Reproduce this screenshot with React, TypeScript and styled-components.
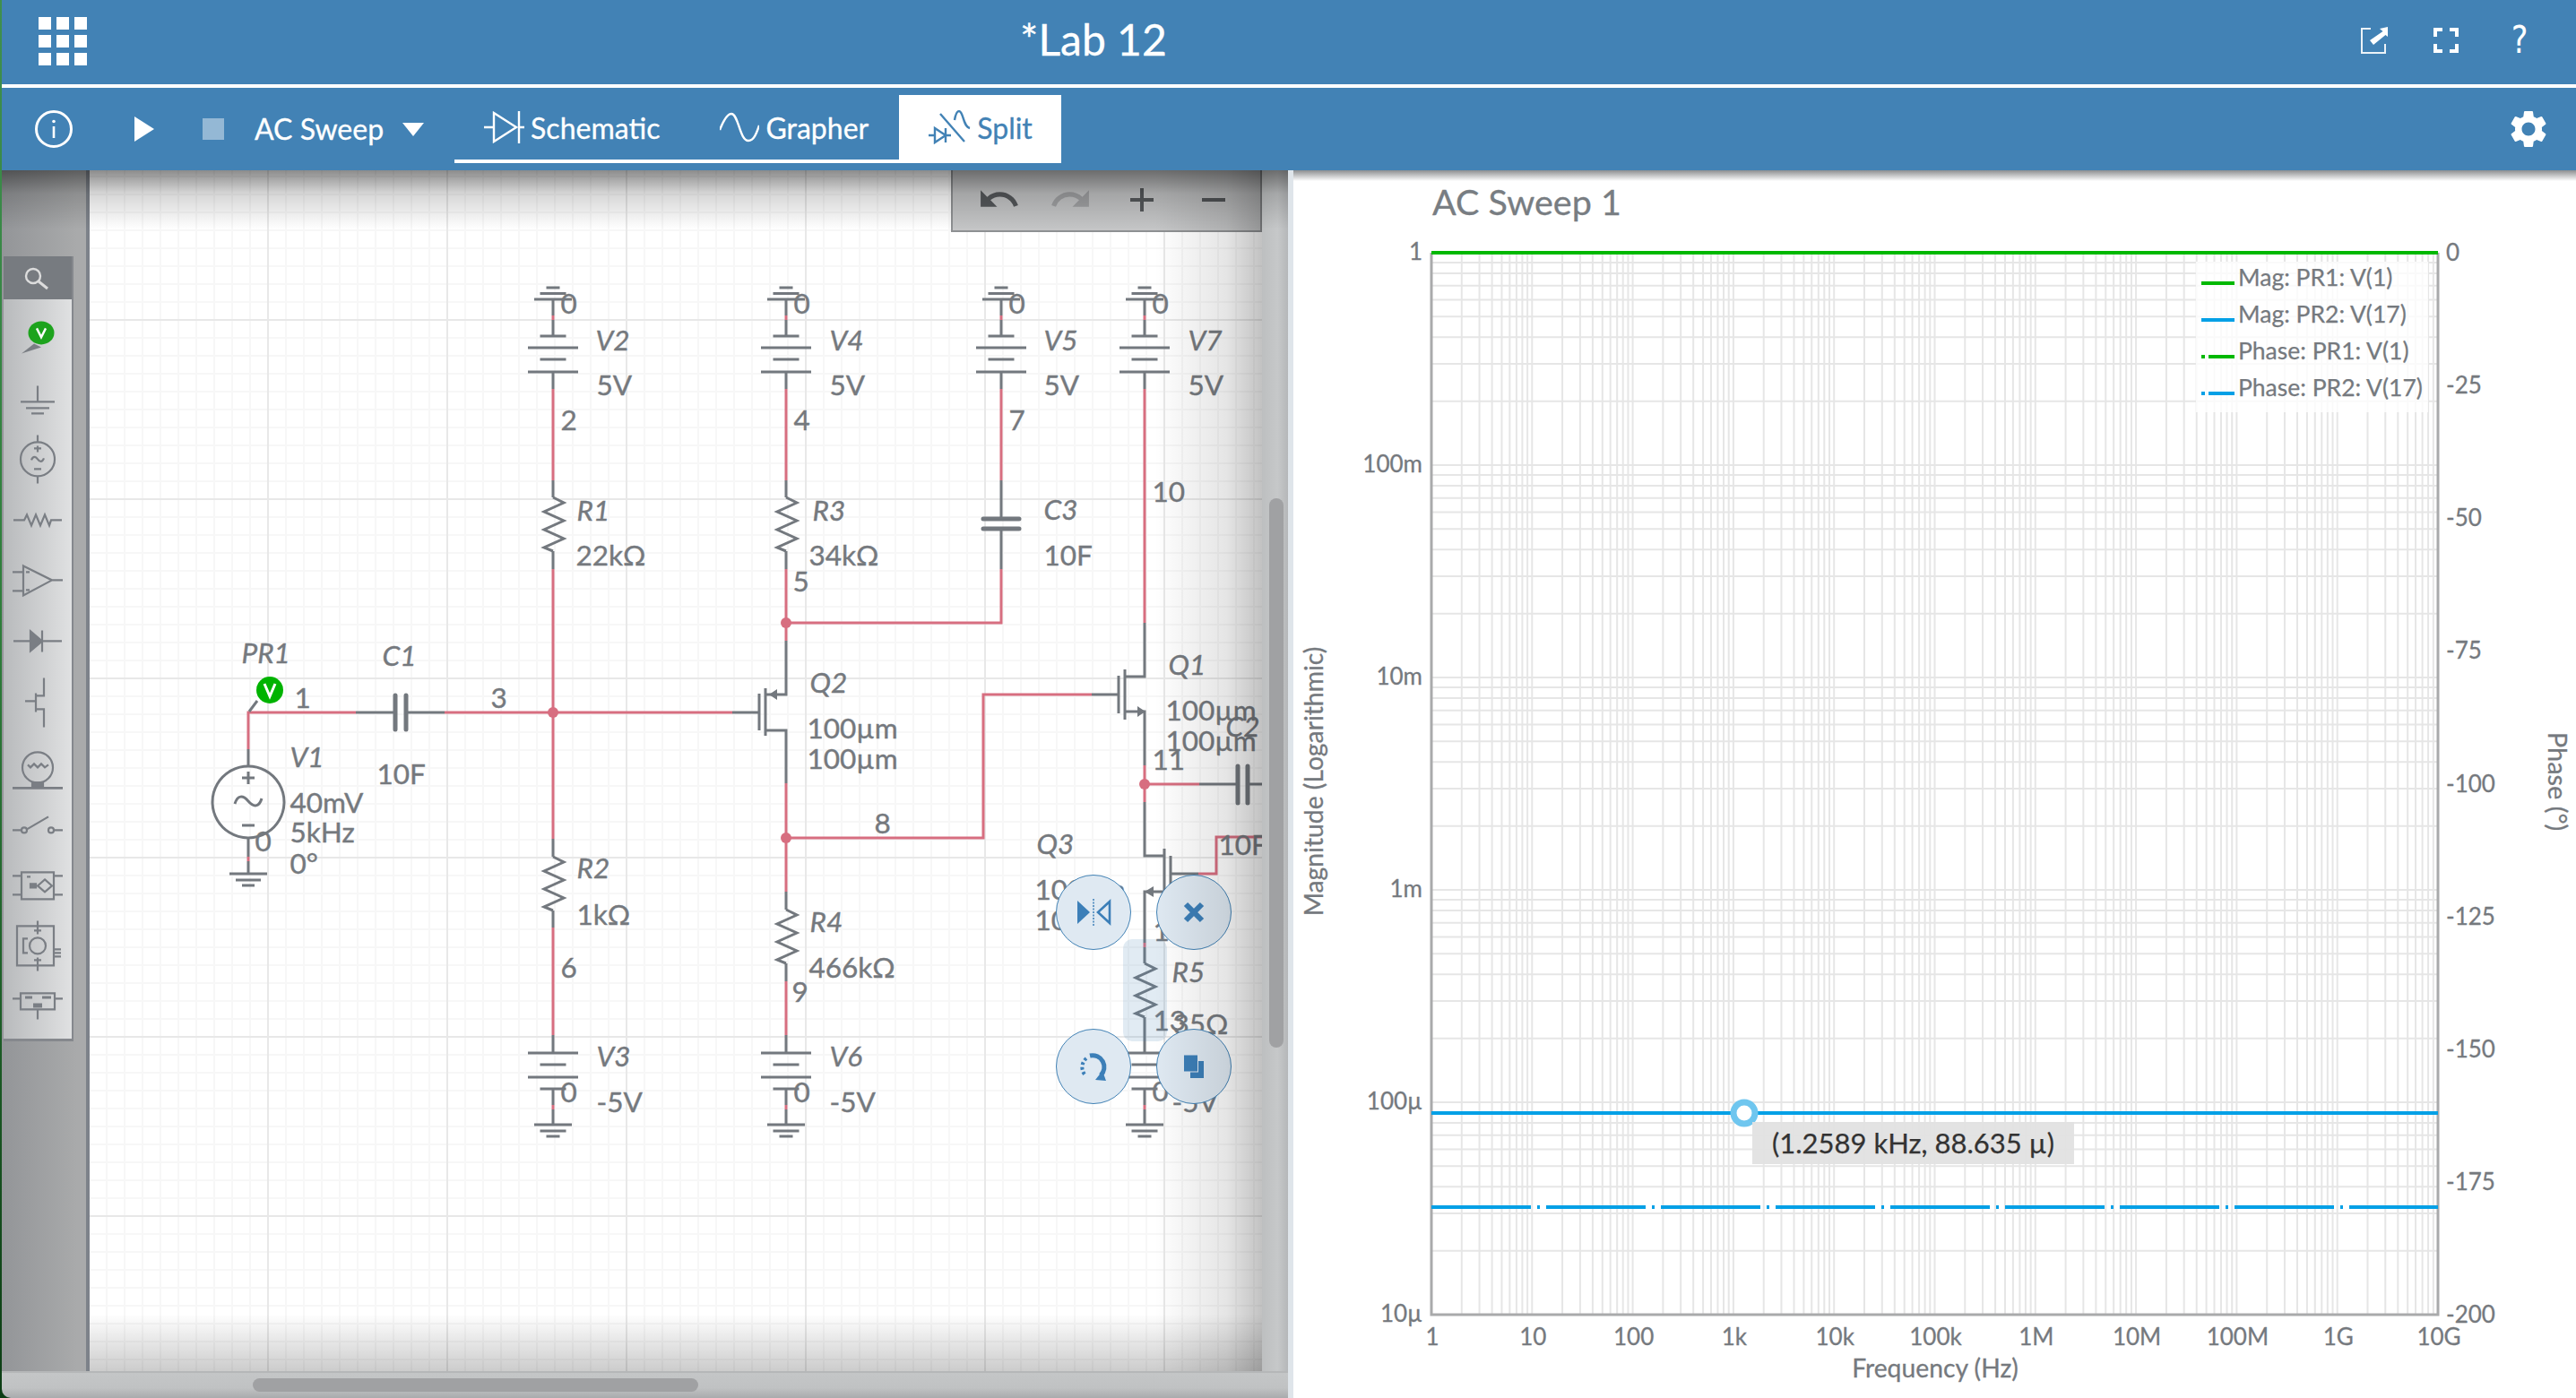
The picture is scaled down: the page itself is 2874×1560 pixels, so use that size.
import React from "react";
import styled, { createGlobalStyle } from "styled-components";
import { MdSettings, MdUndo, MdRedo } from "react-icons/md";

const BLUE = "#4282b5";
const INK = "#75797e";
const WIRE = "#d76e80";
const FONT = `Lato, "Open Sans", sans-serif`;

const Global = createGlobalStyle`
  html, body { margin: 0; padding: 0; background: #fff; }
  * { box-sizing: border-box; }
`;

const Page = styled.div`
  width: 2874px;
  height: 1560px;
  overflow: hidden;
  font-family: ${FONT};
  display: flex;
  flex-direction: column;
  padding-left: 2px;
  background: linear-gradient(to bottom, #3f8f4e, #2e7d3a 45%, #0c3d14);
`;

/* ---------- header ---------- */
const Header = styled.header`
  height: 98px;
  flex: none;
  background: ${BLUE};
  border-bottom: 4px solid #fff;
  display: flex;
  align-items: center;
  color: #fff;
`;
const Launcher = styled.div`
  margin-left: 41px;
  width: 54px;
  height: 54px;
  display: grid;
  grid-template-columns: repeat(3, 14px);
  grid-template-rows: repeat(3, 14px);
  gap: 6px;
  margin-top: -2px;
`;
const LauncherCell = styled.span`
  background: #fff;
`;
const DocTitle = styled.h1`
  margin: 0 0 6px 1041px;
  font-size: 48px;
  font-weight: 400;
  line-height: 1;
  -webkit-text-stroke: 0.3px #fff;
`;
const HeaderIcons = styled.div`
  margin-left: auto;
  display: flex;
  align-items: center;
  padding-right: 52px;
  margin-top: -4px;
`;
const HeaderGlyph = styled.svg`
  display: block;
  margin-right: 51px;
`;
const HelpMark = styled.span`
  font-size: 42px;
  line-height: 1;
  margin-left: 6px;
  font-family: "DejaVu Sans", sans-serif;
  color: #fff;
  transform: scaleX(0.84);
`;

/* ---------- toolbar ---------- */
const Toolbar = styled.nav`
  height: 92px;
  flex: none;
  background: ${BLUE};
  display: flex;
  align-items: center;
  padding-left: 37px;
  color: #fff;
  position: relative;
  -webkit-text-stroke: 0.3px currentColor;
`;
const ToolGlyph = styled.svg<{ $gap?: number }>`
  display: block;
  flex: none;
  margin-left: ${(p) => p.$gap ?? 0}px;
`;
const StopBox = styled.span`
  width: 24px;
  height: 24px;
  margin-left: 54px;
  background: #94b8d5;
`;
const SimMode = styled.span`
  margin-left: 34px;
  font-size: 32px;
  line-height: 1;
`;
const TabBar = styled.div`
  margin-left: 34px;
  height: 76px;
  display: flex;
  border-bottom: 4px solid #fff;
`;
const Tab = styled.div<{ $active?: boolean }>`
  height: 76px;
  padding: 0 ${(p) => (p.$active ? 32 : 34)}px 0 33px;
  display: flex;
  align-items: center;
  gap: 7px;
  font-size: 32px;
  color: ${(p) => (p.$active ? BLUE : "#fff")};
  background: ${(p) => (p.$active ? "#fff" : "transparent")};
`;
const TabGlyph = styled.svg`
  display: block;
  flex: none;
  fill: none;
  stroke: currentColor;
  stroke-width: 2.4;
  margin-bottom: 4px;
`;
const TabLabel = styled.span`
  line-height: 1;
  margin-bottom: 3px;
`;
const Gear = styled.div`
  margin-left: auto;
  margin-right: 28px;
  display: flex;
`;

/* ---------- workspace ---------- */
const Workspace = styled.main`
  flex: 1;
  display: flex;
  min-height: 0;
`;
const LeftPane = styled.section`
  width: 1435px;
  flex: none;
  display: flex;
  flex-direction: column;
  position: relative;
  border-bottom-left-radius: 10px;
  overflow: hidden;
  &::after {
    content: "";
    position: absolute;
    inset: 0 0 auto 0;
    height: 66px;
    background: linear-gradient(to bottom, rgba(0, 0, 0, 0.45), rgba(0, 0, 0, 0.16) 26px, rgba(0, 0, 0, 0) 66px);
    pointer-events: none;
    z-index: 5;
  }
`;
const EditorRow = styled.div`
  display: flex;
  height: 1340px;
  flex: none;
`;
const Sidebar = styled.aside`
  width: 98px;
  flex: none;
  background: linear-gradient(to right, #939598, #a9aaab 90%);
  border-right: 4px solid #7d828a;
  padding: 96px 0 0 2px;
`;
const Palette = styled.div`
  width: 78px;
  height: 876px;
  background: linear-gradient(to right, #b8babc, #e0e1e2);
  border-right: 2px solid #85888d;
  border-bottom: 3px solid #85888d;
  display: flex;
  flex-direction: column;
`;
const PaletteSearch = styled.div`
  height: 48px;
  flex: none;
  background: #777b80;
  display: flex;
  align-items: center;
  justify-content: center;
  padding-top: 4px;
`;
const PaletteList = styled.div`
  padding-top: 3px;
  display: flex;
  flex-direction: column;
`;
const PaletteCell = styled.svg`
  display: block;
  width: 76px;
  height: 68.8px;
  overflow: visible;
  fill: none;
  stroke: #7a7e84;
  stroke-width: 2.2;
`;

const Canvas = styled.div`
  position: relative;
  width: 1308px;
  flex: none;
  overflow: hidden;
  background-color: #fff;
  background-image: linear-gradient(to right, #e8e8e8 2px, transparent 2px),
    linear-gradient(to bottom, #e8e8e8 2px, transparent 2px),
    linear-gradient(to right, #f7f7f7 2px, transparent 2px),
    linear-gradient(to bottom, #f7f7f7 2px, transparent 2px);
  background-size: 200px 200px, 200px 200px, 20px 20px, 20px 20px;
  background-position: 198px 0, 0 166px, 18px 0, 0 6px;
  &::after {
    content: "";
    position: absolute;
    inset: 0;
    pointer-events: none;
    z-index: 4;
    background: linear-gradient(to top, rgba(0, 0, 0, 0.2), rgba(0, 0, 0, 0) 64px),
      linear-gradient(to left, rgba(0, 0, 0, 0.24), rgba(0, 0, 0, 0.1) 40px, rgba(0, 0, 0, 0) 120px);
  }
`;
const Schematic = styled.svg`
  display: block;
  font-family: ${FONT};
`;
const Grey = styled.path`
  fill: none;
  stroke: #73787e;
  stroke-width: 3;
`;
const Red = styled.path`
  fill: none;
  stroke: ${WIRE};
  stroke-width: 3;
`;
const Plate = styled.path`
  fill: none;
  stroke: #73787e;
  stroke-width: 5;
  stroke-linecap: round;
`;
const Junction = styled.circle`
  fill: ${WIRE};
`;
const Arrow = styled.path`
  fill: #73787e;
`;
const Label = styled.text<{ $italic?: boolean }>`
  font-size: 31.5px;
  fill: ${INK};
  stroke: ${INK};
  stroke-width: 0.4px;
  font-style: ${(p) => (p.$italic ? "italic" : "normal")};
`;

const ZoomBar = styled.div`
  position: absolute;
  top: 0;
  right: 0;
  width: 347px;
  height: 69px;
  background: #c4c5c6;
  border: 2px solid #8e9092;
  border-top: none;
  display: grid;
  grid-template-columns: repeat(4, 80px);
  align-items: center;
  justify-items: center;
  padding-bottom: 2px;
  padding-left: 11px;
`;
const ZoomSign = styled.svg`
  display: block;
  stroke: #55585b;
  stroke-width: 4;
`;
const Handle = styled.div<{ $x: number; $y: number }>`
  position: absolute;
  left: ${(p) => p.$x}px;
  top: ${(p) => p.$y}px;
  width: 84px;
  height: 84px;
  border-radius: 50%;
  background: #dfe9f2;
  border: 1.5px solid ${BLUE};
  z-index: 2;
`;
const HandleGlyph = styled.svg`
  display: block;
  position: absolute;
  inset: -1.5px;
  width: 84px;
  height: 84px;
`;
const Selection = styled.div`
  position: absolute;
  left: 1153px;
  top: 858px;
  width: 49px;
  height: 114px;
  border-radius: 10px;
  background: rgba(66, 130, 181, 0.16);
`;

const VTrack = styled.div`
  width: 29px;
  flex: none;
  background: linear-gradient(to right, #bdbfc0, #c6c8c9 60%, #b5b7b9);
  padding: 366px 0 0 8px;
`;
const VThumb = styled.div`
  width: 16px;
  height: 613px;
  border-radius: 8px;
  background: #a0a1a3;
`;
const HTrack = styled.div`
  height: 30px;
  flex: none;
  background: linear-gradient(to bottom, #c4c6c7, #c0c2c3 60%, #a9abad);
  border-top: 2px solid #b5b7b8;
  padding: 6px 0 0 280px;
`;
const HThumb = styled.div`
  width: 497px;
  height: 15px;
  border-radius: 8px;
  background: #a0a1a3;
`;
const Gutter = styled.div`
  width: 6px;
  flex: none;
  background: #dfe5ea;
`;
const RightPane = styled.section`
  flex: 1;
  position: relative;
  background: #fff;
  &::before {
    content: "";
    position: absolute;
    inset: 0 0 auto 0;
    height: 12px;
    background: linear-gradient(to bottom, #8c8e90, #fff);
  }
`;
const PlotTitle = styled.h2`
  margin: 0;
  height: 70px;
  padding-left: 155px;
  font-size: 39.5px;
  font-weight: 400;
  line-height: 70px;
  color: #787d82;
  -webkit-text-stroke: 0.3px #787d82;
`;
const Plot = styled.svg`
  display: block;
  font-family: ${FONT};
`;
const GridLine = styled.path`
  stroke: #e6e6e6;
  stroke-width: 2;
  fill: none;
`;
const Axis = styled.path`
  stroke: #a9aaab;
  stroke-width: 3;
  fill: none;
`;
const Trace = styled.path<{ $color: string; $dash?: string }>`
  stroke: ${(p) => p.$color};
  stroke-width: 4;
  fill: none;
  stroke-dasharray: ${(p) => p.$dash ?? "none"};
`;
const Tick = styled.text<{ $anchor?: string; $size?: number }>`
  font-size: ${(p) => p.$size ?? 26}px;
  fill: ${INK};
  stroke: ${INK};
  stroke-width: 0.3px;
  text-anchor: ${(p) => p.$anchor ?? "middle"};
`;
const Marker = styled.circle`
  fill: #fff;
  stroke: #6fc6ef;
  stroke-width: 7;
`;
const Legend = styled.div`
  position: absolute;
  left: 1007px;
  top: 102px;
  width: 259px;
  height: 168px;
  background: rgba(255, 255, 255, 0.8);
  padding-left: 6px;
`;
const LegendRow = styled.div`
  height: 41px;
  display: flex;
  align-items: flex-start;
  gap: 4px;
  font-size: 26.5px;
  line-height: 34px;
  color: ${INK};
  white-space: nowrap;
  -webkit-text-stroke: 0.25px ${INK};
`;
const Swatch = styled.svg`
  display: block;
  width: 37px;
  height: 4px;
  flex: none;
  margin-top: 22px;
`;
const Tooltip = styled.div`
  position: absolute;
  left: 512px;
  top: 1062px;
  width: 359px;
  height: 47px;
  background: rgba(226, 226, 226, 0.95);
  color: #333;
  font-size: 31px;
  line-height: 47px;
  text-align: center;
  -webkit-text-stroke: 0.25px #333;
`;

/* ---------- schematic drawing ---------- */
const bar = (x: number, y: number, w: number) => `M${x - w / 2} ${y}H${x + w / 2}`;

const TopSupply = ({ x }: { x: number }) => (
  <>
    <Grey
      d={`${bar(x, 321, 15)}${bar(x, 327.5, 29)}${bar(x, 334, 42)}M${x} 334V352M${x} 357V375${bar(x, 375, 29)}${bar(
        x,
        388,
        56
      )}${bar(x, 401, 29)}${bar(x, 415, 56)}M${x} 415V434`}
    />
    <Red d={`M${x} 352V357`} />
  </>
);
const BottomSupply = ({ x }: { x: number }) => (
  <>
    <Grey
      d={`M${x} 1155V1175${bar(x, 1175, 56)}${bar(x, 1188, 29)}${bar(x, 1202, 56)}${bar(x, 1215, 29)}M${x} 1215V1233M${x} 1238V1255${bar(
        x,
        1255,
        42
      )}${bar(x, 1262, 29)}${bar(x, 1268, 15)}`}
    />
    <Red d={`M${x} 1233V1238`} />
  </>
);
const Resistor = ({ x, y }: { x: number; y: number }) => (
  <Grey d={`M${x} ${y}l12 6l-22 10l22 10l-22 10l22 10l-22 10l10 4`} strokeLinejoin="miter" />
);

const labels: [string, number, number, boolean?][] = [
  ["0", 627, 350], ["V2", 666, 391, true], ["5V", 667, 441], ["2", 627, 480], ["R1", 645, 581, true], ["22kΩ", 644, 631],
  ["0", 887, 350], ["V4", 927, 391, true], ["5V", 927, 441], ["4", 887, 480], ["R3", 908, 581, true], ["34kΩ", 904, 631], ["5", 886, 660],
  ["0", 1127, 350], ["V5", 1166, 391, true], ["5V", 1166, 441], ["7", 1127, 480], ["C3", 1166, 580, true], ["10F", 1166, 631],
  ["0", 1287, 350], ["V7", 1327, 391, true], ["5V", 1327, 441], ["10", 1287, 560],
  ["PR1", 271, 740, true], ["C1", 428, 743, true], ["1", 330, 790], ["3", 549, 790], ["V1", 325, 856, true], ["10F", 422, 875],
  ["40mV", 325, 907], ["5kHz", 325, 940], ["0°", 325, 975], ["0", 286, 950],
  ["Q2", 905, 773, true], ["100µm", 902, 824], ["100µm", 902, 858], ["8", 977, 930],
  ["R2", 645, 980, true], ["1kΩ", 645, 1032], ["6", 627, 1091],
  ["R4", 905, 1040, true], ["466kΩ", 904, 1091], ["9", 885, 1118],
  ["V3", 667, 1190, true], ["-5V", 667, 1241], ["0", 627, 1230],
  ["V6", 927, 1190, true], ["-5V", 927, 1241], ["0", 887, 1230],
  ["Q1", 1305, 753, true], ["100µm", 1302, 804], ["100µm", 1302, 838], ["C2", 1369, 822, true], ["11", 1287, 859],
  ["Q3", 1158, 953, true], ["100µm", 1156, 1004], ["100µm", 1156, 1038], ["10F", 1361, 954], ["12", 1288, 1050],
  ["R5", 1309, 1096, true], ["35Ω", 1310, 1154], ["13", 1288, 1150], ["V8", 1327, 1190, true], ["0", 1287, 1229], ["-5V", 1309, 1241],
];

const SchematicDrawing = () => (
  <Schematic width={1308} height={1340} viewBox="100 190 1308 1340">
    <TopSupply x={617} />
    <TopSupply x={877} />
    <TopSupply x={1117} />
    <TopSupply x={1277} />
    <BottomSupply x={617} />
    <BottomSupply x={877} />
    <BottomSupply x={1277} />

    {/* red nets */}
    <Red d="M277 836V795H397M496 795H817" />
    <Red d="M617 434V536M617 635V936M617 1035V1155" />
    <Red d="M877 434V536M877 635V715M877 874V995M877 1095V1155" />
    <Red d="M877 695H1117V635M1117 536V434" />
    <Red d="M1277 434V695" />
    <Red d="M877 935H1097V775H1218" />
    <Red d="M1277 854V895M1277 875H1338" />
    <Red d="M1337 975H1357V934H1408" />
    <Red d="M1277 1052V1057" />

    {/* grey stubs */}
    <Grey d="M397 795H441M452 795H496" />
    <Plate d="M441 776V814M453 776V814" />
    <Grey d="M617 536V555M617 615V635M617 936V956M617 1016V1035" />
    <Grey d="M877 536V555M877 615V635M877 995V1015M877 1075V1095" />
    <Grey d="M1117 536V579M1117 590V635" />
    <Plate d="M1097 579H1137M1097 590H1137" />
    <Resistor x={617} y={555} />
    <Resistor x={877} y={555} />
    <Resistor x={617} y={956} />
    <Resistor x={877} y={1015} />
    <Resistor x={1277} y={1075} />

    {/* source */}
    <Grey d="M277 836V855M277 936V956M277 961V975M256 975H298M263 982H291M270 988H284" />
    <Red d="M277 956V961" />
    <Grey d="M277 855a40 40 0 1 0 .01 0zM270 868H284M277 861V875M270 921H284M262 897c3 -10 9 -10 15 -3s12 7 15 -3" />
    <Grey d="M287 782L278 794" />

    {/* Q2 */}
    <Grey d="M817 795H847M847 774V815M854 768V821M854 775H877V715M854 815H877V874" />
    <Arrow d="M858 775l9 -6v12z" />
    {/* Q1 */}
    <Grey d="M1277 695V755H1255M1255 747V803M1248 754V796M1248 775H1218M1255 794H1277V854M1277 895V955H1299M1299 947V1003M1306 955V996M1306 975H1337" />
    <Arrow d="M1278 794l-9 -6v12z" />
    {/* Q3 */}
    <Grey d="M1299 995H1277V1052M1277 1057V1075M1277 1135V1155" />
    <Arrow d="M1277 995l10 -6v12z" />
    {/* C2 */}
    <Grey d="M1338 875H1381M1392 875H1410" />
    <Plate d="M1381 855V896M1392 855V896" />

    <Junction cx={617} cy={795} r={6} />
    <Junction cx={877} cy={695} r={6} />
    <Junction cx={877} cy={935} r={6} />
    <Junction cx={1277} cy={875} r={6} />

    {labels.map(([t, x, y, it], i) => (
      <Label key={i} x={x - 1.5} y={y} $italic={it}>
        {t}
      </Label>
    ))}

    <circle cx={301} cy={770} r={15} fill="#00b300" />
    <path d="M295 763l6 14l6 -14" fill="none" stroke="#fff" strokeWidth={3} />
  </Schematic>
);

const paletteIcons: { dy: number; art: React.ReactNode }[] = [
  {
    dy: 0,
    art: (
      <>
        <path d="M-18 23l14 -11l8 4z" fill="#7a7e84" stroke="none" />
        <ellipse cx={4} cy={0} rx={14.5} ry={13} fill="#1da31d" stroke="none" />
        <path d="M-1 -5l5 10l5 -10" stroke="#fff" strokeWidth={2.4} />
      </>
    ),
  },
  { dy: 8, art: <path d="M0 -18V0M-19 0H19M-13 7H13M-7 13H7" /> },
  {
    dy: 3,
    art: (
      <>
        <circle cx={0} cy={0} r={19} />
        <path d="M0 -27V-19M0 19V27M-4 -12H4M0 -15V-8M-4 11H4M-7 1c2 -5 5 -4 7 -1s5 4 7 -1" />
      </>
    ),
  },
  { dy: 3, art: <path d="M-27 0H-15l3 -6l5 12l5 -12l5 12l5 -12l5 12l2 -6H27" /> },
  {
    dy: 1,
    art: <path d="M-16 -16L16 0L-16 17ZM-28 -9H-16M-28 12H-16M16 0H28M-13 -9H-9M-13 11H-9" />,
  },
  {
    dy: 0,
    art: (
      <>
        <path d="M-27 0H27M5 -12V12" />
        <path d="M-8 -11L5 0L-8 11Z" fill="#7a7e84" />
      </>
    ),
  },
  { dy: 0, art: <path d="M-14 -2H-2M-2 -11V10M-2 -8H7V-28M-2 7H7V27" /> },
  {
    dy: 5,
    art: (
      <>
        <ellipse cx={0} cy={-2} rx={17} ry={17} />
        <path d="M-11 -5l3 3l4 -4l4 4l4 -4l4 4l4 -3" />
        <path d="M-28 21H28" strokeWidth={2.6} />
        <path d="M-6 15H6V20H-6Z" fill="#7a7e84" />
      </>
    ),
  },
  {
    dy: 2,
    art: (
      <>
        <path d="M-28 3H-18M-12 2L12 -12M18 3H28" />
        <circle cx={-15} cy={3} r={3} />
        <circle cx={15} cy={3} r={3} />
      </>
    ),
  },
  {
    dy: -2,
    art: (
      <>
        <path d="M-18 -15H18V15H-18ZM-28 -11H-18M-28 10H-18M18 -11H28M18 10H28M-12 -10H-8" />
        <path d="M8 -7L16 0L8 7L0 0Z" />
        <path d="M-8 -2H-2V2H-8Z" fill="#7a7e84" />
      </>
    ),
  },
  {
    dy: -4,
    art: (
      <>
        <path d="M-23 -22H18V22H-23ZM0 -28V-13M0 13V28M18 4H26M18 8H26M18 12H26" />
        <circle cx={0} cy={0} r={9} />
        <path d="M-11 -8H-16V8H-11M-4 -17H4M-4 16H4" />
      </>
    ),
  },
  {
    dy: -11,
    art: (
      <>
        <path d="M-19 -9H19V9H-19ZM-28 -3H-19M19 -3H28M0 9V20" />
        <path d="M-14 -6H-6V-3H-14ZM5 -6H15V-3H5ZM-5 2H5V7H-5Z" fill="#7a7e84" stroke="none" />
      </>
    ),
  },
];

const HANDLE_BLUE = "#3c7fb8";

const logTicks = [0, 0.301, 0.477, 0.602, 0.699, 0.778, 0.845, 0.903, 0.954];
const XL = 1597;
const XR = 2720;
const YT = 282;
const YB = 1467;
const xDecade = (XR - XL) / 10;
const yDecade = (YB - YT) / 5;

const gridPath = (() => {
  let d = "";
  for (let i = 0; i < 10; i++) {
    logTicks.forEach((t) => {
      d += `M${XL + (i + t) * xDecade} ${YT}V${YB}`;
    });
  }
  for (let i = 0; i < 5; i++) {
    logTicks.forEach((t) => {
      d += `M${XL} ${YT + (i + 1 - t) * yDecade}H${XR}`;
    });
  }
  return d;
})();

const xLabels = ["1", "10", "100", "1k", "10k", "100k", "1M", "10M", "100M", "1G", "10G"];
const yLabels = ["1", "100m", "10m", "1m", "100µ", "10µ"];
const phaseLabels = ["0", "-25", "-50", "-75", "-100", "-125", "-150", "-175", "-200"];

const legend = [
  { c: "#00b800", dash: false, t: "Mag: PR1: V(1)" },
  { c: "#03a0e6", dash: false, t: "Mag: PR2: V(17)" },
  { c: "#00b800", dash: true, t: "Phase: PR1: V(1)" },
  { c: "#03a0e6", dash: true, t: "Phase: PR2: V(17)" },
];

export default function App() {
  return (
    <Page>
      <Global />
      <Header>
        <Launcher>
          {Array.from({ length: 9 }, (_, i) => (
            <LauncherCell key={i} />
          ))}
        </Launcher>
        <DocTitle>*Lab 12</DocTitle>
        <HeaderIcons>
          <HeaderGlyph width={30} height={30} viewBox="0 0 30 30" fill="none">
            <path d="M11 2H1V29H27V19" stroke="#fff" strokeWidth={2} opacity={0.9} />
            <path d="M30 0L21 2L24.5 5L10 15L14 20L27.5 9L30 11Z" fill="#fff" />
          </HeaderGlyph>
          <HeaderGlyph width={28} height={28} viewBox="0 0 28 28" fill="none">
            <path d="M2 10V2H10M18 2H26V10M26 18V26H18M10 26H2V18" stroke="#fff" strokeWidth={4} />
          </HeaderGlyph>
          <HelpMark>?</HelpMark>
        </HeaderIcons>
      </Header>

      <Toolbar>
        <ToolGlyph width={42} height={42} viewBox="0 0 42 42" fill="none">
          <circle cx={21} cy={21} r={19.5} stroke="#fff" strokeWidth={3} />
          <path d="M21 18V31" stroke="#fff" strokeWidth={2.6} />
          <circle cx={21} cy={12.5} r={1.8} fill="#fff" />
        </ToolGlyph>
        <ToolGlyph $gap={69} width={22} height={28} viewBox="0 0 22 28">
          <path d="M0 0L22 14L0 28Z" fill="#fff" />
        </ToolGlyph>
        <StopBox />
        <SimMode>AC Sweep</SimMode>
        <ToolGlyph $gap={21} width={24} height={15} viewBox="0 0 24 15">
          <path d="M0 0H24L12 15Z" fill="#fff" />
        </ToolGlyph>
        <TabBar>
          <Tab>
            <TabGlyph width={45} height={36} viewBox="0 0 45 36">
              <path d="M0 18H11M11 2V34L36 18ZM39 0V36M39 18H45" />
            </TabGlyph>
            <TabLabel>Schematic</TabLabel>
          </Tab>
          <Tab>
            <TabGlyph width={44} height={34} viewBox="0 0 44 34">
              <path d="M0 20C4 10 8 2 13 2C21 2 22 32 32 32C38 32 41 24 44 15" />
            </TabGlyph>
            <TabLabel>Grapher</TabLabel>
          </Tab>
          <Tab $active>
            <TabGlyph width={47} height={38} viewBox="0 0 47 38">
              <path d="M0 28H7M7 20V36L19 28ZM19 20V36M19 28H25M13 4L40 35M29 11C30 5 32 1 34 1C39 1 38 18 46 20" />
            </TabGlyph>
            <TabLabel>Split</TabLabel>
          </Tab>
        </TabBar>
        <Gear>
          <MdSettings size={50} color="#fff" />
        </Gear>
      </Toolbar>

      <Workspace>
        <LeftPane>
          <EditorRow>
            <Sidebar>
              <Palette>
                <PaletteSearch>
                  <svg width={30} height={28} viewBox="0 0 30 28" fill="none">
                    <ellipse cx={10} cy={10} rx={8} ry={8} stroke="#dcdcdc" strokeWidth={2.4} />
                    <path d="M16 16L26 24" stroke="#dcdcdc" strokeWidth={3} />
                  </svg>
                </PaletteSearch>
                <PaletteList>
                  {paletteIcons.map((ic, i) => (
                    <PaletteCell key={i} viewBox="-38 -34.4 76 68.8">
                      <g transform={`translate(0 ${ic.dy})`}>{ic.art}</g>
                    </PaletteCell>
                  ))}
                </PaletteList>
              </Palette>
            </Sidebar>
            <Canvas>
              <SchematicDrawing />
              <Selection />
              <ZoomBar>
                <MdUndo size={49} color="#55585b" />
                <MdRedo size={49} color="#a0a1a3" />
                <ZoomSign width={28} height={28} viewBox="0 0 28 28">
                  <path d="M1 14H27M14 1V27" />
                </ZoomSign>
                <ZoomSign width={28} height={28} viewBox="0 0 28 28">
                  <path d="M1 14H27" />
                </ZoomSign>
              </ZoomBar>
              <Handle $x={1078} $y={786}>
                <HandleGlyph viewBox="0 0 84 84">
                  <path d="M24 29L38 42L24 55Z" fill={HANDLE_BLUE} />
                  <path d="M47 42L60 30V54Z" fill="none" stroke={HANDLE_BLUE} strokeWidth={2.6} />
                  <path d="M42 27V57" stroke={HANDLE_BLUE} strokeWidth={1.5} strokeDasharray="2 1.5" />
                </HandleGlyph>
              </Handle>
              <Handle $x={1190} $y={786}>
                <HandleGlyph viewBox="0 0 84 84">
                  <path d="M33 33L51 51M51 33L33 51" stroke={HANDLE_BLUE} strokeWidth={6} />
                </HandleGlyph>
              </Handle>
              <Handle $x={1078} $y={958}>
                <HandleGlyph viewBox="0 0 84 84">
                  <path d="M38 30A13 13 0 0 1 50 52" fill="none" stroke={HANDLE_BLUE} strokeWidth={5} />
                  <path d="M44 57L56 58L52 47Z" fill={HANDLE_BLUE} />
                  <path d="M34 33A13 13 0 0 0 33 52" fill="none" stroke={HANDLE_BLUE} strokeWidth={4} strokeDasharray="3 2.5" />
                </HandleGlyph>
              </Handle>
              <Handle $x={1190} $y={958}>
                <HandleGlyph viewBox="0 0 84 84">
                  <rect x={38} y={36} width={15} height={19} fill={HANDLE_BLUE} />
                  <rect x={30.5} y={29} width={16} height={19} fill={HANDLE_BLUE} stroke="#dfe9f2" strokeWidth={1} />
                </HandleGlyph>
              </Handle>
            </Canvas>
            <VTrack>
              <VThumb />
            </VTrack>
          </EditorRow>
          <HTrack>
            <HThumb />
          </HTrack>
        </LeftPane>
        <Gutter />
        <RightPane>
          <PlotTitle>AC Sweep 1</PlotTitle>
          <Plot width={1431} height={1300} viewBox="1443 260 1431 1300">
            <GridLine d={gridPath} />
            <Axis d={`M${XL} ${YT}V${YB}H${XR}V${YT}`} />
            <Trace $color="#00b800" d={`M${XL} ${YT}H${XR}`} />
            <Trace $color="#03a0e6" d={`M${XL} 1242H${XR}`} />
            <Trace $color="#03a0e6" $dash="111 7 3 7" d={`M${XL} 1347H${XR}`} />
            <Marker cx={1946} cy={1242} r={12} />
            {yLabels.map((t, i) => (
              <Tick key={t} $anchor="end" x={1587} y={YT + i * yDecade + 8}>
                {t}
              </Tick>
            ))}
            {phaseLabels.map((t, i) => (
              <Tick key={t} $anchor="start" x={2729} y={YT + (i * (YB - YT)) / 8 + 9}>
                {t}
              </Tick>
            ))}
            {xLabels.map((t, i) => (
              <Tick key={t} x={XL + i * xDecade + 1} y={1501}>
                {t}
              </Tick>
            ))}
            <Tick $size={28.3} x={2159} y={1537}>
              Frequency (Hz)
            </Tick>
            <Tick $size={28.3} transform="translate(1476 872) rotate(-90)">
              Magnitude (Logarithmic)
            </Tick>
            <Tick $size={29} transform="translate(2843 872) rotate(90)">
              Phase (°)
            </Tick>
          </Plot>
          <Legend>
            {legend.map((l) => (
              <LegendRow key={l.t}>
                <Swatch viewBox="0 0 37 4">
                  <Trace $color={l.c} $dash={l.dash ? "4 4 29" : undefined} d="M0 2H37" />
                </Swatch>
                {l.t}
              </LegendRow>
            ))}
          </Legend>
          <Tooltip>(1.2589 kHz, 88.635 µ)</Tooltip>
        </RightPane>
      </Workspace>
    </Page>
  );
}
